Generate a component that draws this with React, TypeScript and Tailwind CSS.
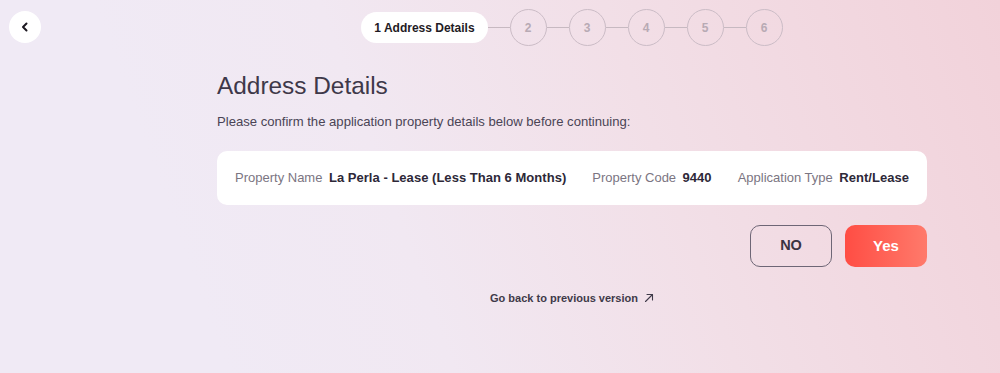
import React from "react";

const font = { fontFamily: '"Liberation Sans", Arial, sans-serif' };

function Stepper() {
  const steps = ["2", "3", "4", "5", "6"];
  return (
    <div className="flex items-center h-[37px] mt-[9px]">
      <div className="h-[31px] px-[13px] rounded-full bg-white flex items-center text-[12px] font-bold text-[#1f1b24]">
        1 Address Details
      </div>
      {steps.map((s) => (
        <React.Fragment key={s}>
          <div className="w-[22px] h-px bg-[#c7b9c1]" />
          <div className="w-[37px] h-[37px] rounded-full border border-[#cbbcc6] flex items-center justify-center text-[12px] font-bold text-[#b8aab4]">
            {s}
          </div>
        </React.Fragment>
      ))}
    </div>
  );
}

function Field({ label, value }: { label: string; value: string }) {
  return (
    <div className="flex items-center gap-[6.5px] whitespace-nowrap">
      <span className="text-[13px] text-[#7b7582]">{label}</span>
      <span className="text-[13px] font-bold text-[#2d2838] tracking-[0.03px]">{value}</span>
    </div>
  );
}

export default function App() {
  return (
    <div
      className="w-full h-[373px] flex bg-[linear-gradient(250deg,#f2d2da_0%,#f2dfe7_35%,#f1e8f2_60%,#f0eaf5_80%)] overflow-hidden"
      style={font}
    >
      <div className="w-[144px] shrink-0 pl-[9px] pt-[11px]">
        <button className="w-[32px] h-[32px] rounded-full bg-white flex items-center justify-center">
          <svg width="10" height="10" viewBox="0 0 10 10" fill="none">
            <path d="M6.5 1.5 L3 5 L6.5 8.5" stroke="#1c1820" strokeWidth="2" strokeLinecap="round" strokeLinejoin="round" />
          </svg>
        </button>
      </div>
      <div className="flex-1 flex flex-col items-center">
        <Stepper />
        <div className="w-[710px] mt-[26px]">
          <h1 className="text-[24.4px] leading-[28px] text-[#3e3849]">Address Details</h1>
          <p className="mt-[13px] text-[13.1px] leading-[18px] text-[#4a4455]">
            Please confirm the application property details below before continuing:
          </p>
          <div className="mt-[20px] h-[54px] rounded-[10px] bg-white flex items-center px-[18px] gap-[26px]">
            <Field label="Property Name" value="La Perla - Lease (Less Than 6 Months)" />
            <Field label="Property Code" value="9440" />
            <Field label="Application Type" value="Rent/Lease" />
          </div>
          <div className="mt-[20px] flex justify-end gap-[13px]">
            <button className="w-[82px] h-[42px] rounded-[10px] border border-[#6e6676] text-[14.5px] font-bold text-[#3a3442]">
              NO
            </button>
            <button className="w-[82px] h-[42px] rounded-[10px] bg-[linear-gradient(90deg,#ff4d44,#ff7a6b)] text-[15px] font-bold text-white">
              Yes
            </button>
          </div>
          <div className="mt-[23px] flex justify-center items-center gap-[6px] text-[11px] leading-[16px] font-bold text-[#3f3a49]">
            <span>Go back to previous version</span>
            <svg width="10" height="10" viewBox="0 0 10 10" fill="none">
              <path d="M1.5 8.5 L8.5 1.5 M3 1.5 H8.5 V7" stroke="#3f3a49" strokeWidth="1.1" strokeLinecap="round" strokeLinejoin="round" />
            </svg>
          </div>
        </div>
      </div>
    </div>
  );
}
